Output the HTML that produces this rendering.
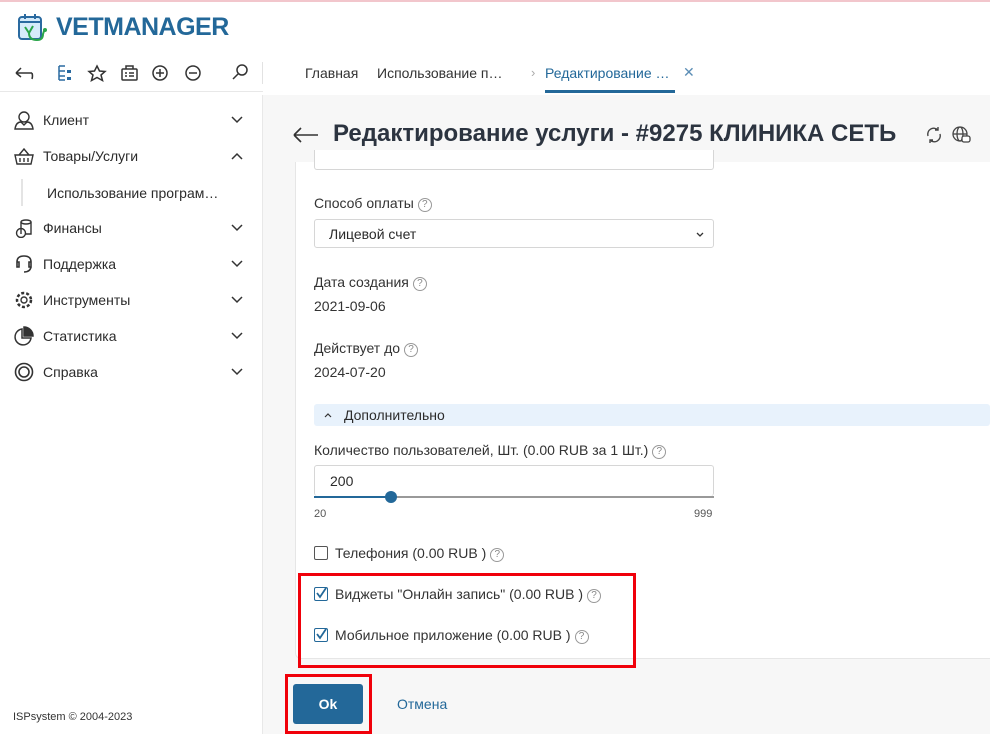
<!DOCTYPE html>
<html><head><meta charset="utf-8"><style>
*{box-sizing:border-box;margin:0;padding:0}
body{width:990px;height:734px;overflow:hidden;background:#fff;font-family:"Liberation Sans","DejaVu Sans",sans-serif;color:#2b2b2b;position:relative;font-size:14px}
.abs{position:absolute}
.topline{left:0;top:0;width:990px;height:2px;background:#f2c6cc}
.nav{left:0;top:95px;width:263px;height:639px;border-right:1px solid #e8e8e8}
.mi{position:absolute;left:0;width:263px;height:36px;font-size:14px;color:#2b2b2b}
.mi .t{position:absolute;left:43px;top:10px}
.mi .ic{position:absolute;left:13px;top:8px}
.mi .ch{position:absolute;left:231px;top:14px}
.main{left:263px;top:95px;width:727px;height:639px;background:#f7f7f7}
.card{left:295px;top:162px;width:700px;height:497px;background:#fff;border:1px solid #e6e6e6;border-top:none;border-radius:0 0 0 6px}
.lbl{font-size:14px;color:#333}
.q{display:inline-block;width:14px;height:14px;border:1px solid #999;border-radius:50%;font-size:10px;line-height:12px;text-align:center;color:#888;vertical-align:1px;margin-left:4px}
.inp{border:1px solid #d6d6d6;border-radius:3px;background:#fff}
.cb{display:inline-block;width:14px;height:14px;border:1.5px solid #555;border-radius:2px;vertical-align:-2px;margin-right:7px;position:relative}
</style></head><body>
<div class="abs topline"></div>
<svg class="abs" style="left:17px;top:12px" width="34" height="32" viewBox="0 0 34 32">
<rect x="2" y="5" width="22" height="22" rx="3" fill="#d6ebfa" stroke="#2a6aa0" stroke-width="2"/>
<line x1="2" y1="10" x2="24" y2="10" stroke="#2a6aa0" stroke-width="2"/>
<line x1="8" y1="2" x2="8" y2="7" stroke="#2a6aa0" stroke-width="2"/><line x1="18" y1="2" x2="18" y2="7" stroke="#2a6aa0" stroke-width="2"/>
<path d="M8 15 L12 21 L16 14 M12 21 Q12 28 20 28 Q26 28 26 22 L27 19" fill="none" stroke="#2aa54a" stroke-width="2"/>
<circle cx="28" cy="18" r="2" fill="#2aa54a"/>
</svg>
<div class="abs" style="left:56px;top:13px;font-size:25px;font-weight:bold;color:#236899;letter-spacing:-0.5px">VETMANAGER</div>
<svg class="abs" style="left:12px;top:62px" width="240" height="22" viewBox="0 0 240 22" fill="none" stroke="#333" stroke-width="1.5">
<path d="M4 11 H20 M4 11 L9 6 M4 11 L9 15 M20 11 Q21 14 20 17"/>
<path d="M47 4 H53 M47 4 V18 M47 9 H53 M47 14 H53 M47 18 H53" stroke="#2a6aa0"/><rect x="55" y="8" width="4" height="3" fill="#2a6aa0" stroke="none"/><rect x="55" y="15" width="4" height="3" fill="#2a6aa0" stroke="none"/>
<path d="M85 4 L87.5 9 L93 9.5 L89 13 L90.5 18.5 L85 15.5 L79.5 18.5 L81 13 L77 9.5 L82.5 9 Z"/>
<rect x="110" y="7" width="15" height="11" rx="1"/><path d="M114 7 V4 H121 V7 M113 11 H115 M117 11 H122 M113 14 H115 M117 14 H122"/>
<circle cx="148" cy="11" r="7"/><path d="M144 11 H152 M148 7 V15"/>
<circle cx="181" cy="11" r="7"/><path d="M177 11 H185"/>
<circle cx="230" cy="8" r="5"/><path d="M226 12 L221 17"/>
</svg>
<div class="abs" style="left:262px;top:62px;width:1px;height:22px;background:#e2e2e2"></div>
<div class="abs" style="left:0;top:91px;width:263px;height:1px;background:#e8e8e8"></div>
<div class="abs" style="left:305px;top:65px;font-size:14px;color:#333">Главная</div>
<div class="abs" style="left:377px;top:65px;font-size:14px;color:#333">Использование п…</div>
<div class="abs" style="left:531px;top:65px;font-size:13px;color:#aaa">›</div>
<div class="abs" style="left:545px;top:65px;font-size:14px;color:#236899">Редактирование …</div>
<div class="abs" style="left:683px;top:64px;font-size:14px;color:#5b8db5">✕</div>
<div class="abs" style="left:545px;top:90px;width:130px;height:3px;background:#236899"></div>
<div class="abs nav">
 <div class="mi" style="top:7px"><svg class="ic" width="22" height="20" viewBox="0 0 22 20" fill="none" stroke="#333" stroke-width="1.4"><circle cx="11" cy="7" r="5"/><path d="M2 19 Q3 12 8 12 L11 15 L14 12 Q19 12 20 19 Z"/></svg><span class="t">Клиент</span><svg class="ch" width="12" height="8" viewBox="0 0 12 8"><path d="M1 1 L6 6 L11 1" fill="none" stroke="#333" stroke-width="1.5"/></svg></div>
 <div class="mi" style="top:43px"><svg class="ic" width="22" height="20" viewBox="0 0 22 20" fill="none" stroke="#333" stroke-width="1.4"><path d="M2 9 H20 L18 18 H4 Z M6 9 L11 3 L16 9 M7 12 V16 M11 12 V16 M15 12 V16"/></svg><span class="t">Товары/Услуги</span><svg class="ch" width="12" height="8" viewBox="0 0 12 8"><path d="M1 7 L6 2 L11 7" fill="none" stroke="#333" stroke-width="1.5"/></svg></div>
 <div class="abs" style="left:21px;top:84px;width:2px;height:27px;background:#e4e4e4"></div>
 <div class="abs" style="left:47px;top:90px;font-size:14px">Использование програм…</div>
 <div class="mi" style="top:115px"><svg class="ic" width="22" height="20" viewBox="0 0 22 20" fill="none" stroke="#333" stroke-width="1.4"><ellipse cx="13" cy="4" rx="5" ry="2"/><path d="M8 4 V16 M18 4 V16 H12"/><circle cx="8" cy="15" r="4.5"/></svg><span class="t">Финансы</span><svg class="ch" width="12" height="8" viewBox="0 0 12 8"><path d="M1 1 L6 6 L11 1" fill="none" stroke="#333" stroke-width="1.5"/></svg></div>
 <div class="mi" style="top:151px"><svg class="ic" width="22" height="20" viewBox="0 0 22 20" fill="none" stroke="#333" stroke-width="1.6"><path d="M4 12 V8 Q4 2 11 2 Q18 2 18 8 V12 M4 8 H6 V13 H4 Z M16 8 H18 V13 H16 Z M18 13 Q17 18 11 18"/></svg><span class="t">Поддержка</span><svg class="ch" width="12" height="8" viewBox="0 0 12 8"><path d="M1 1 L6 6 L11 1" fill="none" stroke="#333" stroke-width="1.5"/></svg></div>
 <div class="mi" style="top:187px"><svg class="ic" width="22" height="20" viewBox="0 0 22 20" fill="none" stroke="#333" stroke-width="1.4"><circle cx="11" cy="10" r="3"/><circle cx="11" cy="10" r="7" stroke-dasharray="3 2" stroke-width="2.5"/></svg><span class="t">Инструменты</span><svg class="ch" width="12" height="8" viewBox="0 0 12 8"><path d="M1 1 L6 6 L11 1" fill="none" stroke="#333" stroke-width="1.5"/></svg></div>
 <div class="mi" style="top:223px"><svg class="ic" width="22" height="20" viewBox="0 0 22 20" fill="none" stroke="#333" stroke-width="1.5"><path d="M9 3 A8 8 0 1 0 18 12 H9 Z"/><path d="M11 1 V10 H20 A9 9 0 0 0 11 1 Z" fill="#333"/></svg><span class="t">Статистика</span><svg class="ch" width="12" height="8" viewBox="0 0 12 8"><path d="M1 1 L6 6 L11 1" fill="none" stroke="#333" stroke-width="1.5"/></svg></div>
 <div class="mi" style="top:259px"><svg class="ic" width="22" height="20" viewBox="0 0 22 20" fill="none" stroke="#333" stroke-width="1.6"><circle cx="11" cy="10" r="8.5"/><circle cx="11" cy="10" r="5"/></svg><span class="t">Справка</span><svg class="ch" width="12" height="8" viewBox="0 0 12 8"><path d="M1 1 L6 6 L11 1" fill="none" stroke="#333" stroke-width="1.5"/></svg></div>
 <div class="abs" style="left:13px;top:616px;font-size:11px;color:#333">ISPsystem © 2004-2023</div>
</div>
<div class="abs main"></div>
<svg class="abs" style="left:292px;top:127px" width="28" height="16" viewBox="0 0 28 16"><path d="M2 8 H26 M2 8 L9 1 M2 8 L9 15" fill="none" stroke="#333" stroke-width="1.6"/></svg>
<div class="abs" style="left:333px;top:120px;font-size:24px;font-weight:bold;color:#2c3440">Редактирование услуги - #9275 КЛИНИКА СЕТЬ</div>
<svg class="abs" style="left:925px;top:126px" width="18" height="18" viewBox="0 0 18 18" fill="none" stroke="#444" stroke-width="1.4"><path d="M3 10 A6 6 0 0 1 13 4 M15 8 A6 6 0 0 1 5 14 M13 1 V4 H10 M5 17 V14 H8"/></svg>
<svg class="abs" style="left:951px;top:125px" width="20" height="20" viewBox="0 0 20 20" fill="none" stroke="#444" stroke-width="1.3"><circle cx="9" cy="9" r="7"/><ellipse cx="9" cy="9" rx="3" ry="7"/><path d="M2 9 H16"/><rect x="11" y="11" width="8" height="6" rx="2" fill="#fff"/></svg>
<div class="abs card"></div>
<div class="abs inp" style="left:314px;top:150px;width:400px;height:20px;border-top:none;border-radius:0 0 3px 3px"></div>
<div class="abs lbl" style="left:314px;top:195px">Способ оплаты<span class="q">?</span></div>
<div class="abs inp" style="left:314px;top:219px;width:400px;height:29px"><span style="position:absolute;left:14px;top:6px;font-size:14px">Лицевой счет</span><svg style="position:absolute;right:9px;top:12px" width="8" height="6" viewBox="0 0 8 6"><path d="M1 1 L4 4 L7 1" fill="none" stroke="#333" stroke-width="1.3"/></svg></div>
<div class="abs lbl" style="left:314px;top:274px">Дата создания<span class="q">?</span></div>
<div class="abs lbl" style="left:314px;top:298px">2021-09-06</div>
<div class="abs lbl" style="left:314px;top:340px">Действует до<span class="q">?</span></div>
<div class="abs lbl" style="left:314px;top:364px">2024-07-20</div>
<div class="abs" style="left:314px;top:404px;width:676px;height:22px;background:#e8f2fc;border-radius:3px"><svg style="position:absolute;left:10px;top:8px" width="8" height="6" viewBox="0 0 8 6"><path d="M1 5 L4 2 L7 5" fill="none" stroke="#333" stroke-width="1.2"/></svg><span style="position:absolute;left:30px;top:3px;font-size:14px">Дополнительно</span></div>
<div class="abs lbl" style="left:314px;top:442px">Количество пользователей, Шт. (0.00 RUB за 1 Шт.)<span class="q">?</span></div>
<div class="abs inp" style="left:314px;top:465px;width:400px;height:31px;border-bottom:none"><span style="position:absolute;left:15px;top:7px">200</span></div>
<div class="abs" style="left:314px;top:496px;width:400px;height:2px;background:#999"></div>
<div class="abs" style="left:314px;top:496px;width:77px;height:2px;background:#236899"></div>
<div class="abs" style="left:385px;top:491px;width:12px;height:12px;border-radius:50%;background:#236899"></div>
<div class="abs" style="left:314px;top:508px;font-size:11px;color:#555">20</div>
<div class="abs" style="left:694px;top:508px;font-size:11px;color:#555">999</div>
<div class="abs lbl" style="left:314px;top:545px"><span class="cb"></span>Телефония (0.00 RUB )<span class="q">?</span></div>
<div class="abs lbl" style="left:314px;top:586px"><span class="cb" style="border-color:#236899"><svg style="position:absolute;left:0;top:-1px" width="12" height="12" viewBox="0 0 12 12"><path d="M2 6 L5 10 L11 1" fill="none" stroke="#236899" stroke-width="1.8"/></svg></span>Виджеты "Онлайн запись" (0.00 RUB )<span class="q">?</span></div>
<div class="abs lbl" style="left:314px;top:627px"><span class="cb" style="border-color:#236899"><svg style="position:absolute;left:0;top:-1px" width="12" height="12" viewBox="0 0 12 12"><path d="M2 6 L5 10 L11 1" fill="none" stroke="#236899" stroke-width="1.8"/></svg></span>Мобильное приложение (0.00 RUB )<span class="q">?</span></div>
<div class="abs" style="left:298px;top:573px;width:338px;height:95px;border:3px solid #f0000a"></div>
<div class="abs" style="left:293px;top:684px;width:70px;height:40px;background:#236899;border-radius:3px;color:#fff;font-weight:bold;font-size:14px;text-align:center;line-height:40px">Ok</div>
<div class="abs" style="left:285px;top:674px;width:87px;height:60px;border:3px solid #f0000a"></div>
<div class="abs" style="left:397px;top:696px;font-size:14px;color:#236899">Отмена</div>
</body></html>
